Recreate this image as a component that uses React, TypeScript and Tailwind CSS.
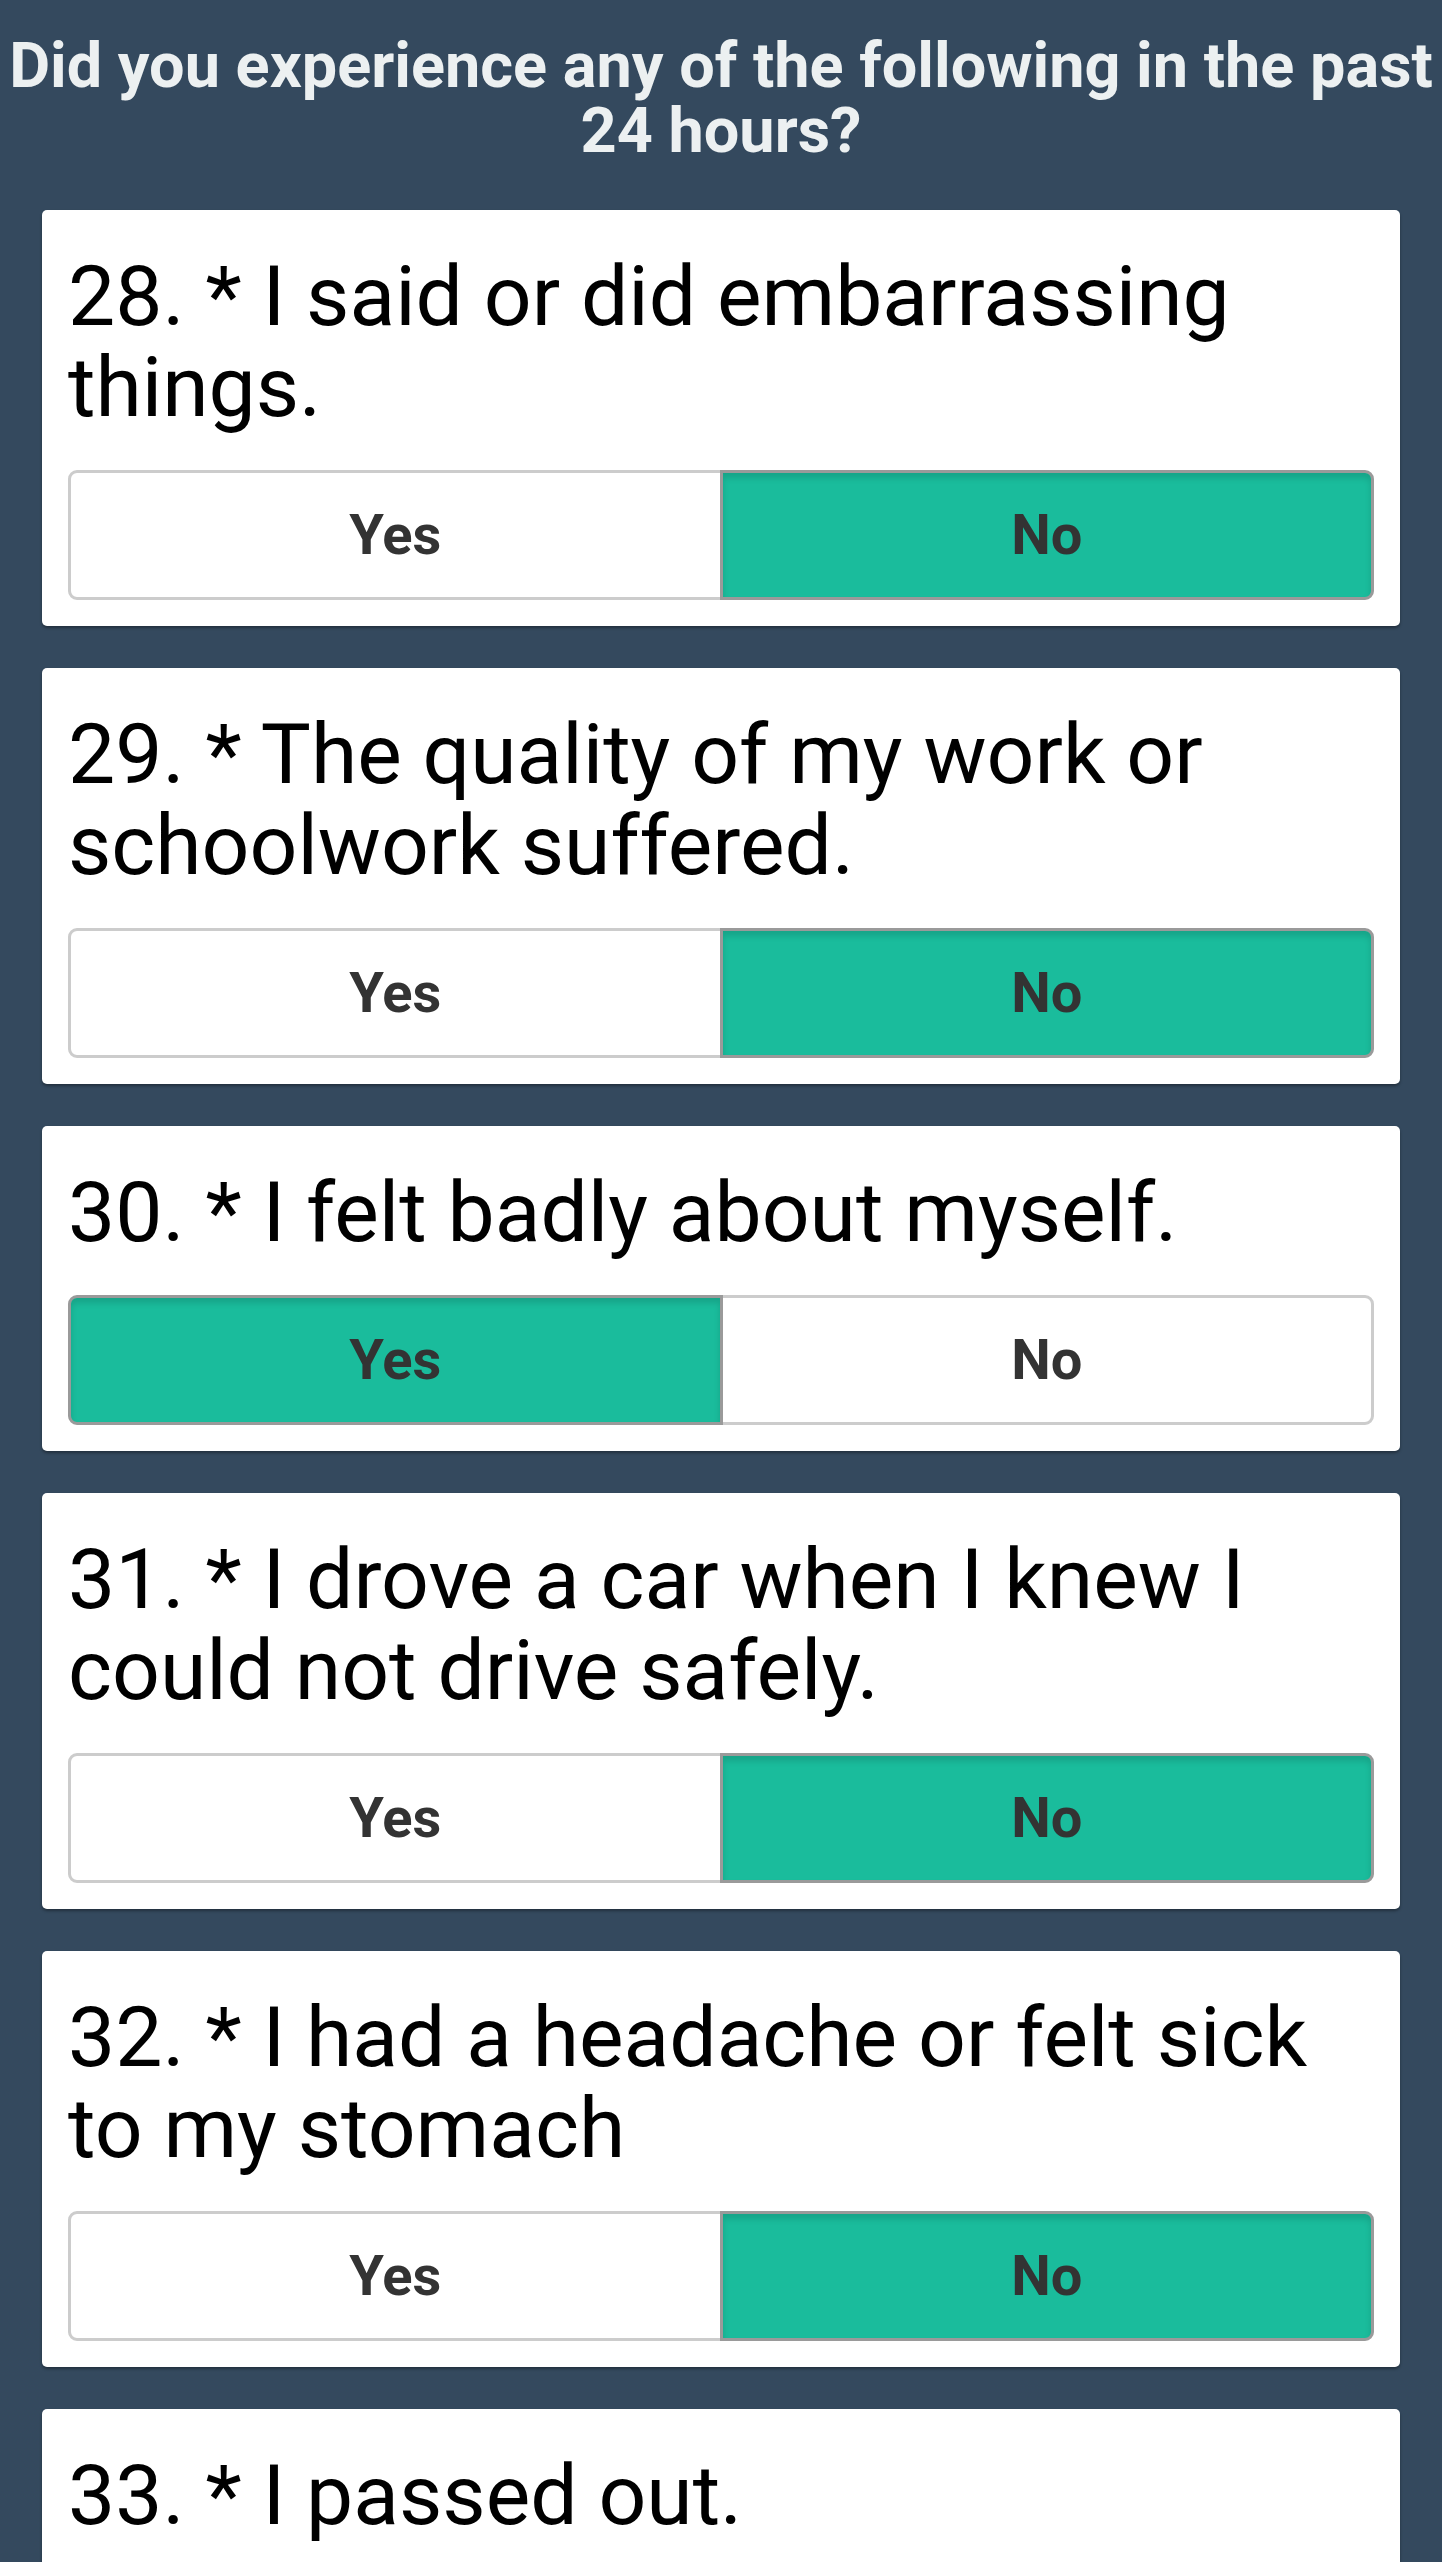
import React, { useState } from "react";

type Answer = "yes" | "no";

const questions: { id: number; text: string; answer: Answer }[] = [
  { id: 28, text: "I said or did embarrassing things.", answer: "no" },
  { id: 29, text: "The quality of my work or schoolwork suffered.", answer: "no" },
  { id: 30, text: "I felt badly about myself.", answer: "yes" },
  { id: 31, text: "I drove a car when I knew I could not drive safely.", answer: "no" },
  { id: 32, text: "I had a headache or felt sick to my stomach", answer: "no" },
  { id: 33, text: "I passed out.", answer: "no" },
];

function Toggle({ value, onChange }: { value: Answer; onChange: (v: Answer) => void }) {
  const base =
    "flex-1 h-[130px] flex items-center justify-center border-[3px] text-[56px] font-bold text-[#333]";
  const on =
    "relative z-10 bg-[#1abc9c] border-[#9a9a9a] shadow-[inset_0_5px_6px_rgba(0,0,0,0.13)]";
  const off = "bg-white border-[#cccccc]";

  return (
    <div className="flex">
      <button
        className={`${base} rounded-l-[9px] ${value === "yes" ? on : off}`}
        onClick={() => onChange("yes")}
      >
        Yes
      </button>
      <button
        className={`${base} -ml-[3px] rounded-r-[9px] ${value === "no" ? on : off}`}
        onClick={() => onChange("no")}
      >
        No
      </button>
    </div>
  );
}

export default function App() {
  const [answers, setAnswers] = useState<Answer[]>(questions.map((q) => q.answer));

  return (
    <div className="min-h-screen bg-[#34495e] font-['Roboto',_sans-serif] pt-[33px] pb-[40px]">
      {/* Header */}
      <h1 className="text-center text-[#ecf0f1] font-bold text-[63px] leading-[65px] px-1">
        Did you experience any of the following in the past 24 hours?
      </h1>

      {/* Question cards */}
      <div className="flex flex-col gap-[42px] px-[42px] mt-[47px]">
        {questions.map((q, i) => (
          <div
            key={q.id}
            className="bg-white rounded-[5px] shadow-[0_2px_3px_rgba(0,0,0,0.35)] pt-[41px] px-[26px] pb-[26px]"
          >
            <p className="text-black text-[84px] leading-[91px] mb-[37px]">
              {q.id}. * {q.text}
            </p>
            <Toggle
              value={answers[i]}
              onChange={(v) => {
                const next = [...answers];
                next[i] = v;
                setAnswers(next);
              }}
            />
          </div>
        ))}
      </div>
    </div>
  );
}
